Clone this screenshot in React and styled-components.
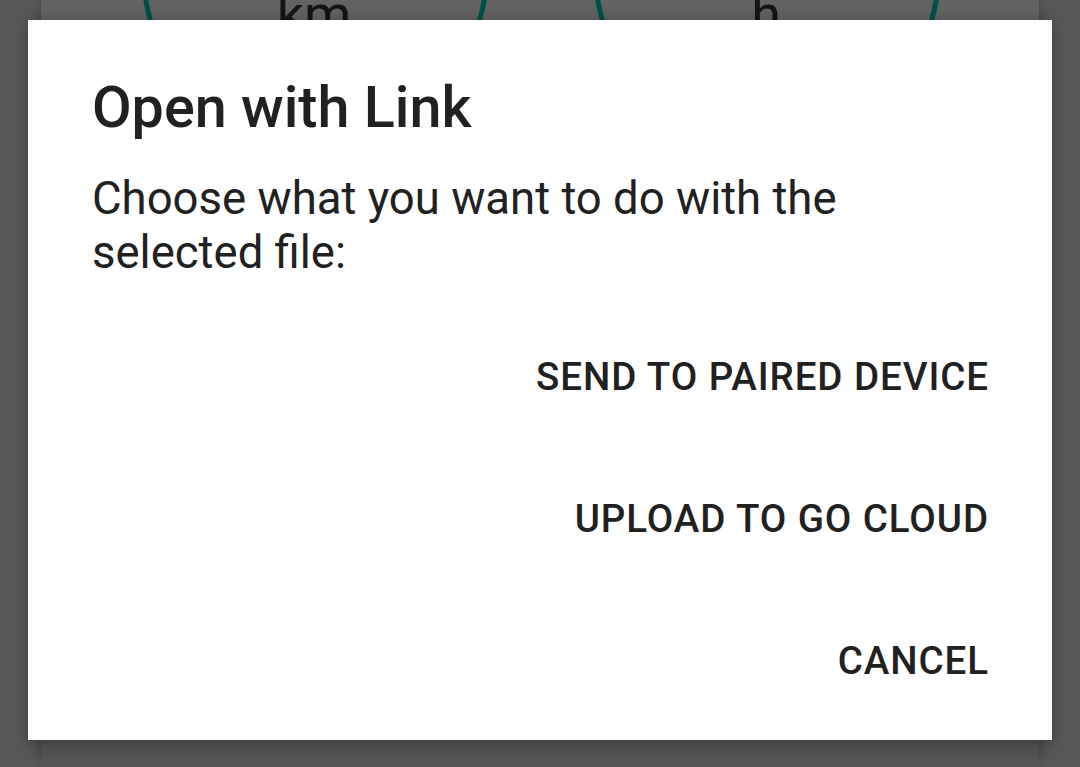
import React from "react";
import styled, { createGlobalStyle } from "styled-components";

const Global = createGlobalStyle`
  html, body { margin: 0; padding: 0; }
  body {
    width: 1080px;
    height: 767px;
    overflow: hidden;
    background: #595959;
    font-family: Roboto, "Noto Sans", "Liberation Sans", sans-serif;
  }
`;

const Screen = styled.div`
  position: relative;
  width: 1080px;
  height: 767px;
  display: flex;
  justify-content: center;
  background: #595959;
`;

const Panel = styled.div`
  position: relative;
  width: 998px;
  height: 767px;
  background: linear-gradient(#636363, #5e5e5e 30%, #565656);
  box-shadow: 0 0 10px rgba(0, 0, 0, 0.25);
  overflow: hidden;
`;

const Gauge = styled.div`
  position: absolute;
  top: ${(p) => p.$top}px;
  left: ${(p) => p.$left}px;
  width: 348px;
  height: 348px;
  border-radius: 50%;
  border: 5px solid #02504a;
  box-sizing: border-box;
`;

const Unit = styled.span`
  position: absolute;
  top: -15px;
  left: ${(p) => p.$left}px;
  width: 120px;
  text-align: center;
  font-family: Roboto, sans-serif;
  font-size: 54px;
  line-height: 60px;
  color: #141414;
`;

const Dialog = styled.div`
  position: absolute;
  top: 20px;
  left: 28px;
  width: 1024px;
  height: 720px;
  box-sizing: border-box;
  background: #ffffff;
  box-shadow: 0 4px 18px rgba(0, 0, 0, 0.35);
  display: flex;
  flex-direction: column;
  padding: 56px 63px 0 64px;
`;

const Title = styled.h1`
  margin: 0;
  font-family: Roboto, sans-serif;
  font-weight: 500;
  font-size: 57.5px;
  line-height: 64px;
  color: #212121;
`;

const Message = styled.p`
  margin: 32px 0 0 0;
  width: 860px;
  font-family: Roboto, sans-serif;
  font-weight: 400;
  font-size: 45.5px;
  line-height: 54px;
  color: #212121;
`;

const Actions = styled.div`
  margin-top: 26px;
  display: flex;
  flex-direction: column;
  align-items: flex-end;
`;

const ActionButton = styled.button`
  height: 142px;
  padding: 0;
  border: none;
  background: transparent;
  font-family: Roboto, sans-serif;
  font-weight: 500;
  font-size: 38.5px;
  line-height: 142px;
  letter-spacing: 0.024em;
  text-transform: uppercase;
  color: #212121;
  cursor: pointer;
`;

export default function App() {
  return (
    <>
      <Global />
      <Screen>
        <Panel>
          <Gauge $left={100} $top={-202} />
          <Gauge $left={552} $top={-202} />
          <Unit $left={213}>km</Unit>
          <Unit $left={665}>h</Unit>
        </Panel>
        <Dialog role="dialog">
          <Title>Open with Link</Title>
          <Message>Choose what you want to do with the selected file:</Message>
          <Actions>
            <ActionButton>Send to paired device</ActionButton>
            <ActionButton>Upload to Go Cloud</ActionButton>
            <ActionButton>Cancel</ActionButton>
          </Actions>
        </Dialog>
      </Screen>
    </>
  );
}
